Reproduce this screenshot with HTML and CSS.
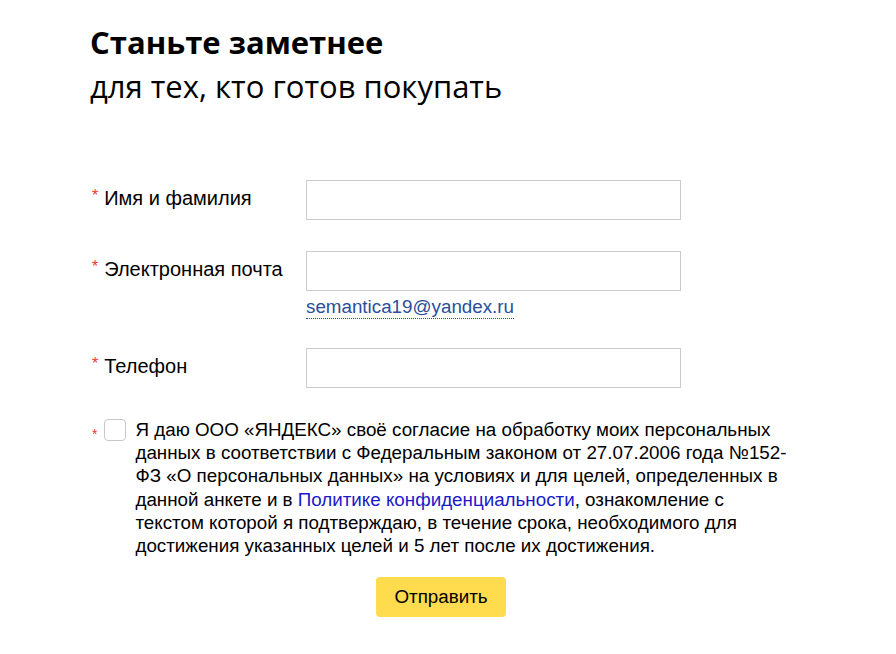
FILE: index.html
```html
<!DOCTYPE html>
<html lang="ru">
<head>
    <meta charset="UTF-8">
    <meta name="viewport" content="width=device-width, initial-scale=1.0">
    <title>Станьте заметнее</title>
    <link rel="stylesheet" href="styles.css">
</head>
<body>
    <div class="container">
        <h1 class="title">Станьте заметнее</h1>
        <div class="subtitle">для тех, кто готов покупать</div>

        <form class="form">
            <div class="row">
                <label class="label" for="name"><span class="req">*</span>Имя и фамилия</label>
                <div class="field">
                    <input type="text" id="name" class="input">
                </div>
            </div>
            <div class="row">
                <label class="label" for="email"><span class="req">*</span>Электронная почта</label>
                <div class="field">
                    <input type="text" id="email" class="input">
                    <a href="#" class="email-hint">semantica19@yandex.ru</a>
                </div>
            </div>
            <div class="row">
                <label class="label" for="phone"><span class="req">*</span>Телефон</label>
                <div class="field">
                    <input type="text" id="phone" class="input">
                </div>
            </div>

            <div class="agree">
                <span class="req">*</span>
                <span class="checkbox"></span>
                <p class="agree-text">Я даю ООО «ЯНДЕКС» своё согласие на обработку моих персональных данных в соответствии с Федеральным законом от 27.07.2006 года №152-ФЗ «О персональных данных» на условиях и для целей, определенных в данной анкете и в <a href="#" class="link">Политике конфиденциальности</a>, ознакомление с текстом которой я подтверждаю, в течение срока, необходимого для достижения указанных целей и 5 лет после их достижения.</p>
            </div>

            <div class="actions">
                <button type="submit" class="submit">Отправить</button>
            </div>
        </form>
    </div>
</body>
</html>
```

FILE: styles.css
```css
* {
    margin: 0;
    padding: 0;
    box-sizing: border-box;
}

body {
    font-family: 'Liberation Sans', Arial, sans-serif;
    color: #000;
    background-color: #fff;
}

.container {
    padding: 21px 0 0 90px;
    width: 800px;
}

.title {
    font-family: 'Open Sans', 'Noto Sans', sans-serif;
    font-size: 31px;
    font-weight: 700;
    line-height: 43px;
}

.subtitle {
    font-family: 'Open Sans', 'Noto Sans', sans-serif;
    font-size: 31px;
    line-height: 43px;
    margin-top: 1px;
}

.form {
    margin-top: 72px;
}

.row {
    display: flex;
    margin-bottom: 31px;
}

.row:nth-child(2) {
    margin-bottom: 29px;
}

.label {
    width: 216px;
    font-size: 20px;
    line-height: 20px;
    padding-top: 8px;
}

.req {
    color: #f33;
    font-size: 16px;
    vertical-align: top;
    margin-right: 8px;
    position: relative;
    top: -2px;
    left: 2px;
}

.field {
    display: flex;
    flex-direction: column;
}

.input {
    width: 375px;
    height: 40px;
    border: 1px solid #ccc;
    background: #fff;
    font-size: 16px;
    padding: 0 10px;
}

.email-hint {
    margin-top: 5px;
    font-size: 18.8px;
    line-height: 22px;
    color: #2a4e9b;
    text-decoration: none;
    border-bottom: 1px dotted #2a4e9b;
    align-self: flex-start;
}

.agree {
    display: flex;
    align-items: flex-start;
}

.agree .req {
    top: 7px;
    margin-right: 9px;
    font-size: 14px;
}

.checkbox {
    flex: none;
    width: 22px;
    height: 22px;
    border: 1px solid #c8c8c8;
    border-radius: 4px;
    margin-right: 9px;
}

.agree-text {
    width: 656px;
    font-size: 18.8px;
    line-height: 23.2px;
    margin-top: -1px;
}

.link {
    color: #1a1ac8;
    text-decoration: none;
}

.actions {
    display: flex;
    justify-content: center;
    width: 702px;
    margin-top: 20px;
}

.submit {
    width: 130px;
    height: 40px;
    background-color: #ffdb4d;
    border: none;
    border-radius: 4px;
    font-family: 'Liberation Sans', Arial, sans-serif;
    font-size: 18.8px;
    color: #000;
    cursor: pointer;
}
```
